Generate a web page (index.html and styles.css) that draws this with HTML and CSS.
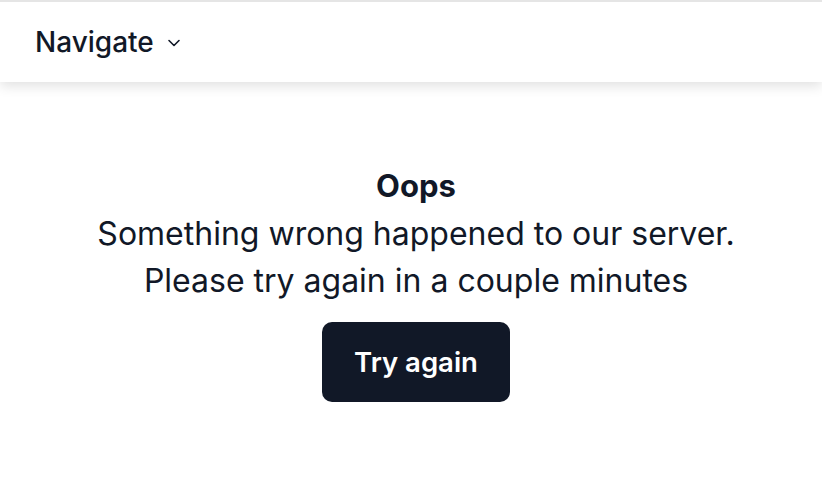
FILE: index.html
```html
<!DOCTYPE html>
<html>
<head>
<meta charset="utf-8">
<link rel="stylesheet" href="styles.css">
</head>
<body>
<header class="topbar">
  <button class="nav-toggle">
    <span>Navigate</span>
    <svg class="chev" width="14" height="14" viewBox="0 0 14 14" fill="none" stroke="#111827" stroke-width="1.6" stroke-linecap="round" stroke-linejoin="round"><path d="M2 4.5 L7 9.5 L12 4.5"/></svg>
  </button>
</header>
<main class="error">
  <h1 class="title">Oops</h1>
  <p class="msg">Something wrong happened to our server.<br>Please try again in a couple minutes</p>
  <button class="retry">Try again</button>
</main>
</body>
</html>
```
FILE: styles.css
```css
html, body { margin: 0; padding: 0; background: #fff; }
body {
  font-family: Inter, "Noto Sans", sans-serif;
  color: #111827;
  border-top: 2px solid #e5e5e5;
}
.topbar {
  height: 80px;
  display: flex;
  align-items: center;
  padding: 0 35px;
  background: #fff;
  box-shadow: 0 4px 12px rgba(0,0,0,0.12);
  position: relative;
}
.nav-toggle {
  display: flex;
  align-items: center;
  gap: 13px;
  background: none;
  border: 0;
  padding: 0;
  font-family: inherit;
  font-size: 28px;
  font-weight: 500;
  color: #111827;
}
.chev { margin-top: 2px; }
.error {
  display: flex;
  flex-direction: column;
  align-items: center;
  text-align: center;
  padding-top: 80px;
  padding-left: 10px;
}
.title {
  margin: 0;
  font-size: 31px;
  font-weight: 700;
  line-height: 48px;
}
.msg {
  margin: 0;
  font-size: 32px;
  line-height: 47px;
}
.retry {
  margin-top: 18px;
  width: 188px;
  height: 80px;
  border: 0;
  border-radius: 10px;
  background: #111827;
  color: #fff;
  font-family: inherit;
  font-size: 27.5px;
  font-weight: 600;
}
```
